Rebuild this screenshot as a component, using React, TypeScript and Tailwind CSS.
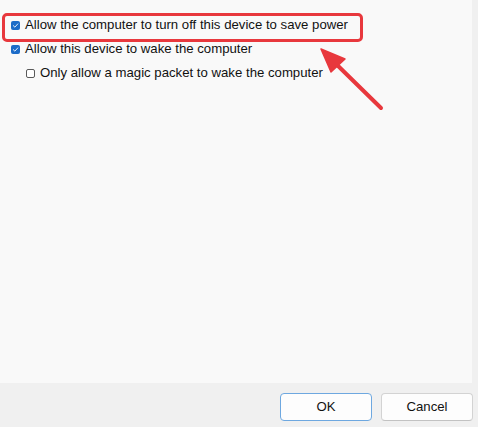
import React from 'react'

function Box({ checked }: { checked: boolean }) {
  if (checked) {
    return (
      <span className="flex h-[9px] w-[9px] shrink-0 items-center justify-center rounded-[2px] bg-[#1c6cc8]">
        <svg width="7" height="7" viewBox="0 0 8 8">
          <path d="M1.5 4.2 L3.3 5.9 L6.6 2.2" fill="none" stroke="#ffffff" strokeWidth="1" strokeLinecap="round" strokeLinejoin="round" />
        </svg>
      </span>
    )
  }
  return <span className="h-[9px] w-[9px] shrink-0 rounded-[2px] border border-[#5a5a5a] bg-white" />
}

function Row({ checked, label, indent }: { checked: boolean; label: string; indent?: boolean }) {
  return (
    <div className={`flex h-[24px] items-center gap-[5px] ${indent ? 'pl-[26px]' : 'pl-[11px]'}`}>
      <Box checked={checked} />
      <span className="text-[13.2px] leading-none text-[#111]">{label}</span>
    </div>
  )
}

export default function App() {
  return (
    <div
      className="flex h-[427px] w-[478px] flex-col bg-[#f0f0f0]"
      style={{ fontFamily: '"Liberation Sans", Arial, sans-serif' }}
    >
      <div className="relative h-[383px] w-[472px] bg-[#f9f9f9] pt-[13px]">
        <Row checked label="Allow the computer to turn off this device to save power" />
        <Row checked label="Allow this device to wake the computer" />
        <Row checked={false} indent label="Only allow a magic packet to wake the computer" />

        {/* annotation */}
        <div className="pointer-events-none absolute left-[2px] top-[13px] h-[29px] w-[361px] rounded-[5px] border-[3px] border-[#e8383d]" />
        <svg className="pointer-events-none absolute left-0 top-0" width="472" height="130">
          <line x1="381" y1="108" x2="332" y2="60" stroke="#e8383d" strokeWidth="4" strokeLinecap="round" />
          <path d="M321 49 L345 59 L331 72 Z" fill="#e8383d" stroke="#e8383d" strokeWidth="1.5" strokeLinejoin="round" />
        </svg>
      </div>

      <div className="flex justify-end gap-[9px] pr-[5px] pt-[10px]">
        <button className="flex h-[28px] w-[92px] items-center justify-center rounded-[4px] border border-[#6ea8e0] bg-[#fdfdfd] text-[13.2px] text-[#111]">
          OK
        </button>
        <button className="flex h-[28px] w-[92px] items-center justify-center rounded-[4px] border border-[#d3d3d3] border-b-[#c2c2c2] bg-[#fdfdfd] text-[13.2px] text-[#111]">
          Cancel
        </button>
      </div>
    </div>
  )
}
